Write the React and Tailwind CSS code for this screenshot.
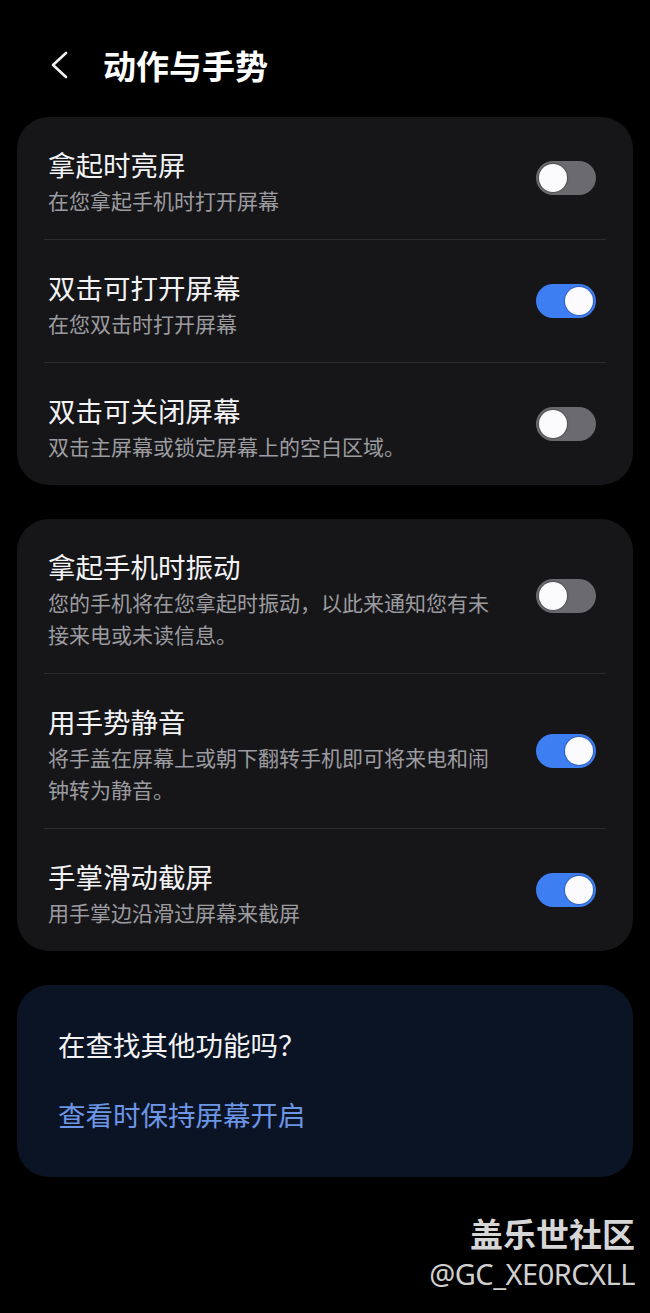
import React from "react";

const CJK = { fontFamily: '"Noto Sans CJK SC", "Noto Sans", sans-serif' };

function Toggle({ on }) {
  return (
    <div
      className={
        "relative w-[60px] h-[34px] rounded-full shrink-0 mb-[6px] " +
        (on ? "bg-[#3d7ef3]" : "bg-[#6b6b6f]")
      }
    >
      <div
        className={
          "absolute top-[3px] w-[28px] h-[28px] rounded-full bg-[#fbfbfd] shadow-[0_0_1px_1px_rgba(0,0,0,0.25)] " +
          (on ? "right-[3px]" : "left-[3px]")
        }
      />
    </div>
  );
}

function Row({ title, sub, on, first }) {
  return (
    <div
      className={
        "flex items-center justify-between pl-[4px] pr-[10px] pt-[29px] pb-[23px] " +
        (first ? "" : "border-t border-[#2d2d30]")
      }
    >
      <div className="max-w-[452px]">
        <div className="text-[27.5px] leading-[36px] text-[#f3f3f5]">{title}</div>
        <div className="mt-[2px] text-[21px] leading-[32px] text-[#9c9ca0]">{sub}</div>
      </div>
      <Toggle on={on} />
    </div>
  );
}

export default function App() {
  const card1 = [
    { title: "拿起时亮屏", sub: "在您拿起手机时打开屏幕", on: false },
    { title: "双击可打开屏幕", sub: "在您双击时打开屏幕", on: true },
    { title: "双击可关闭屏幕", sub: "双击主屏幕或锁定屏幕上的空白区域。", on: false },
  ];
  const card2 = [
    {
      title: "拿起手机时振动",
      sub: "您的手机将在您拿起时振动，以此来通知您有未接来电或未读信息。",
      on: false,
    },
    {
      title: "用手势静音",
      sub: "将手盖在屏幕上或朝下翻转手机即可将来电和闹钟转为静音。",
      on: true,
    },
    { title: "手掌滑动截屏", sub: "用手掌边沿滑过屏幕来截屏", on: true },
  ];
  return (
    <div className="w-[650px] min-h-[1313px] bg-black pb-[24px]" style={CJK}>
      <div className="h-[117px] pt-[13px] flex items-center">
        <svg
          className="ml-[48px]"
          width="24"
          height="32"
          viewBox="0 0 24 32"
          fill="none"
        >
          <polyline
            points="18,4 5,16 18,28"
            stroke="#f2f2f2"
            strokeWidth="2.6"
            strokeLinecap="round"
            strokeLinejoin="round"
          />
        </svg>
        <div className="ml-[31px] text-[33px] leading-[44px] font-bold text-white">
          动作与手势
        </div>
      </div>

      <div className="mx-[17px] rounded-[32px] bg-[#161618] px-[27px]">
        {card1.map((r, i) => (
          <Row key={i} {...r} first={i === 0} />
        ))}
      </div>

      <div className="mt-[34px] mx-[17px] rounded-[32px] bg-[#161618] px-[27px]">
        {card2.map((r, i) => (
          <Row key={i} {...r} first={i === 0} />
        ))}
      </div>

      <div className="mt-[34px] mx-[17px] rounded-[32px] bg-[#0b1424] pl-[41px] pt-[41px] pb-[45px]">
        <div className="text-[27.5px] leading-[36px] text-[#f3f3f5]">在查找其他功能吗？</div>
        <div className="mt-[34px] text-[27.5px] leading-[36px] text-[#6d95e6]">
          查看时保持屏幕开启
        </div>
      </div>

      <div className="mt-[36px] pr-[15px] flex flex-col items-end">
        <div className="text-[33px] leading-[40px] font-bold text-[#d6d6d6]">盖乐世社区</div>
        <div
          className="mt-[3px] text-[29px] leading-[36px] text-[#d0d0d0] tracking-[-0.5px]"
          style={{ fontFamily: '"Noto Sans", sans-serif' }}
        >
          @GC_XE0RCXLL
        </div>
      </div>
    </div>
  );
}
